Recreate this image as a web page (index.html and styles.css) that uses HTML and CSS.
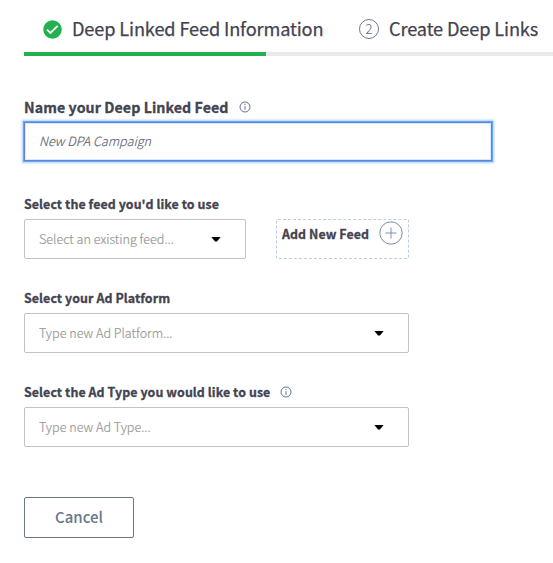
FILE: index.html
```html
<!DOCTYPE html>
<html lang="en">
<head>
<meta charset="utf-8">
<title>Deep Linked Feed</title>
<link rel="stylesheet" href="styles.css">
</head>
<body>
<nav class="steps">
  <div class="step step-active">
    <svg class="check" viewBox="0 0 19 19"><circle cx="9.5" cy="9.5" r="9.3" fill="#22b14c"/><path d="M4 9.7l3.4 3.3 7.2-7.2" fill="none" stroke="#fff" stroke-width="1.8"/></svg>
    <span class="step-title">Deep Linked Feed Information</span>
  </div>
  <div class="step step-next">
    <span class="step-number">2</span>
    <span class="step-title">Create Deep Links</span>
  </div>
</nav>
<main class="form">
  <section class="field">
    <label class="label label-large" for="name"><span>Name your Deep Linked Feed</span>
      <svg class="info" viewBox="0 0 12 12"><circle cx="6" cy="6" r="5"/><path d="M6 5v3.8M6 3v1.1"/></svg></label>
    <input id="name" class="name-input" type="text" placeholder="New DPA Campaign">
  </section>
  <section class="field field-feed">
    <div class="label"><span>Select the feed you'd like to use</span></div>
    <div class="row">
      <div class="select select-small"><span>Select an existing feed...</span><i class="caret"></i></div>
      <div class="add"><span>Add New Feed</span><svg class="plus" viewBox="0 0 24 24"><circle cx="12" cy="12" r="11.2"/><path d="M12 6.5v11M6.5 12h11"/></svg></div>
    </div>
  </section>
  <section class="field field-platform">
    <div class="label"><span>Select your Ad Platform</span></div>
    <div class="select"><span>Type new Ad Platform...</span><i class="caret"></i></div>
  </section>
  <section class="field field-type">
    <div class="label"><span>Select the Ad Type you would like to use</span>
      <svg class="info" viewBox="0 0 12 12"><circle cx="6" cy="6" r="5"/><path d="M6 5v3.8M6 3v1.1"/></svg></div>
    <div class="select"><span>Type new Ad Type...</span><i class="caret"></i></div>
  </section>
  <button class="cancel" type="button">Cancel</button>
</main>
</body>
</html>
```

FILE: styles.css
```css
* { box-sizing: border-box; }
body {
  margin: 0;
  background: #fff;
  color: #434351;
  font-family: "Noto Sans CJK SC", "Noto Sans", sans-serif;
  overflow: hidden;
}
.steps { display: flex; width: 529px; height: 56px; margin-left: 24px; }
.step { display: flex; align-items: center; height: 56px; border-bottom: 4px solid #e8e8ed; padding-top: 6px; white-space: nowrap; }
.step-active { width: 242px; border-color: #22b14c; padding-left: 19px; }
.step-next { flex: 1; padding-left: 93px; }
.check { width: 19px; height: 19px; margin-right: 10px; flex: none; }
.step-title { padding-bottom: 2px; font-size: 18.2px; line-height: 28px; letter-spacing: -0.14px; -webkit-text-stroke: 0.25px; }
.step-number { display: flex; flex: none; align-items: center; justify-content: center; width: 20px; height: 20px; margin-right: 10px; border: 1px solid #77778c; border-radius: 50%; color: #66667c; font-size: 13px; font-weight: 300; line-height: 18px; }
.form { padding: 42px 0 0 24px; }
.field { display: flex; flex-direction: column; }
.label { display: flex; align-items: center; height: 20px; margin-bottom: 5px; font-size: 12.4px; font-weight: 700; letter-spacing: 0.09px; white-space: nowrap; -webkit-text-stroke: 0.3px; }
.label-large { margin-bottom: 4px; padding-bottom: 2px; font-size: 14.2px; letter-spacing: 0.08px; }
.info { width: 12px; height: 12px; margin-left: 10px; fill: none; stroke: #63778f; stroke-width: 1; }
.name-input { width: 468px; height: 39px; padding: 0 14px 2px; border: 1px solid #6383cb; outline: 0; background: #fff; box-shadow: 0 0 0 1px #68a5fb, 0 0 2px 2px #a9d0ff, inset 0 0 0 1px #d7e8ff; font: italic 300 12.6px "Noto Sans CJK SC", sans-serif; }
.name-input::placeholder { color: #626274; opacity: 1; -webkit-text-stroke: 0.15px; }
.field-feed { margin-top: 33px; }
.row { display: flex; gap: 30px; }
.select { display: flex; align-items: center; justify-content: space-between; width: 385px; height: 40px; padding: 0 24px 0 14px; border: 1px solid #c3c3c3; border-radius: 2px; color: #999; font-size: 12.6px; font-weight: 300; white-space: nowrap; -webkit-text-stroke: 0.2px; }
.select span { padding-bottom: 2px; }
.select-small { width: 222px; }
.caret { width: 10px; height: 5px; background: #000; clip-path: polygon(0 0, 100% 0, 60% 100%, 40% 100%); }
.add { display: flex; justify-content: space-between; width: 133px; height: 40px; padding: 1px 5px; border: 1px dashed #bccce2; border-radius: 2px; font-size: 12.4px; font-weight: 700; line-height: 27px; letter-spacing: 0.09px; white-space: nowrap; -webkit-text-stroke: 0.3px; }
.plus { width: 24px; height: 24px; fill: none; stroke: #7f8da0; stroke-width: 1; }
.plus path { stroke: #7594b8; }
.field-platform { margin-top: 29px; }
.field-type { margin-top: 29px; }
.cancel { display: flex; align-items: center; justify-content: center; width: 110px; height: 41px; margin-top: 50px; padding: 0 0 2px; border: 1px solid #68778b; border-radius: 2px; background: #fff; color: #68778b; font: 500 15px "Noto Sans CJK SC", sans-serif; }
```
